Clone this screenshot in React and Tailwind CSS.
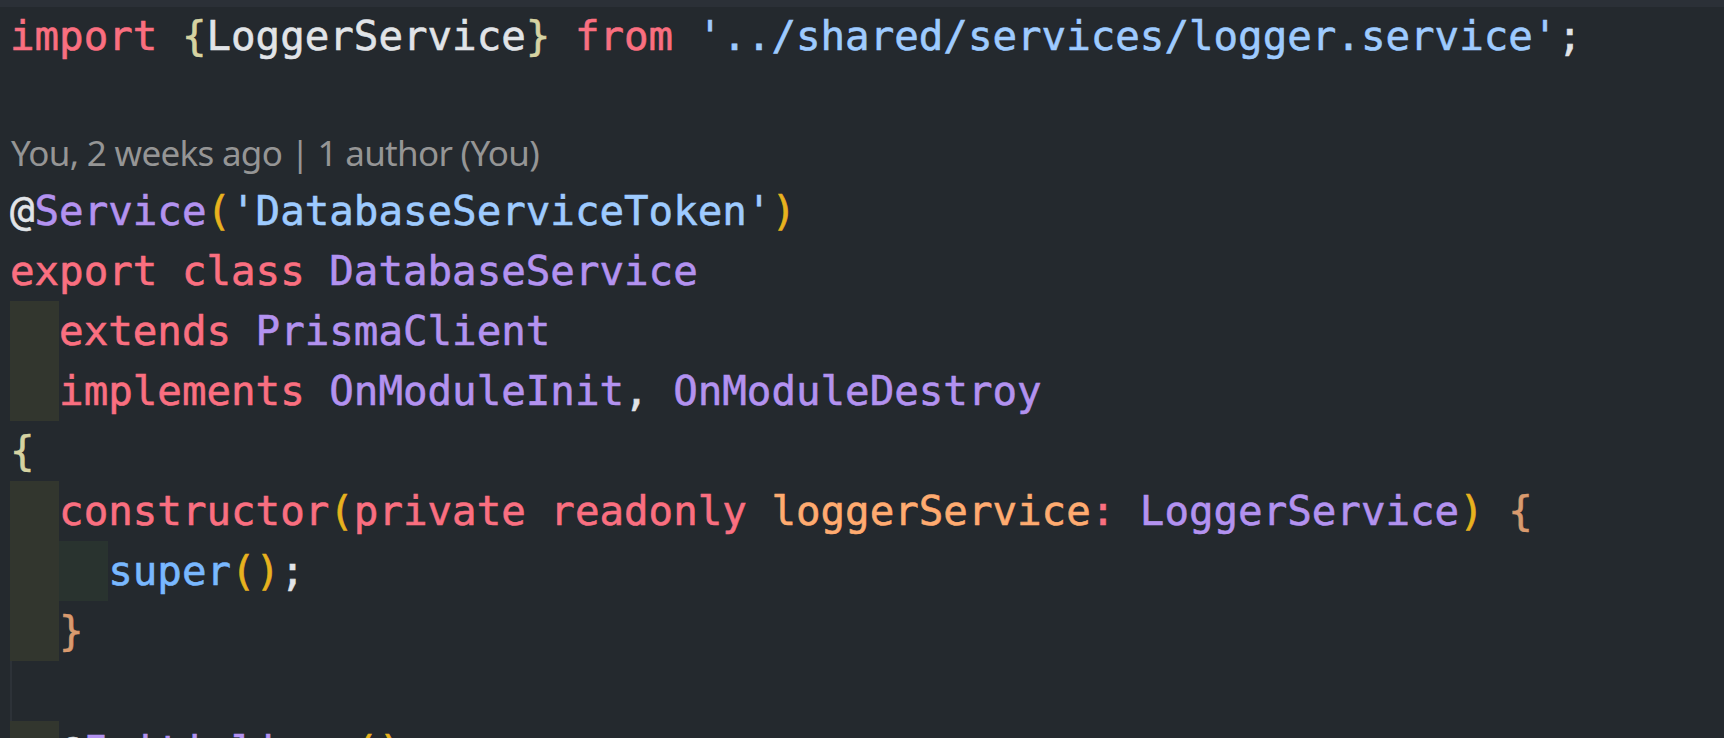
import React from "react";

const KW = "text-[#fa6f80]";
const ENT = "text-[#b392f0]";
const STR = "text-[#9ecbff]";
const CON = "text-[#79b8ff]";
const VAR = "text-[#ffab70]";
const FG = "text-[#e1e4e8]";
const BR1 = "text-[#e8b21e]";
const BR2 = "text-[#d6d3a2]";
const BR3 = "text-[#d99a6e]";

function Row({ children, indent = [], guide = false, h = "h-[60px]" }) {
  return (
    <div className={`flex ${h} pl-[10px] whitespace-pre`}>
      {indent.map((c, i) => (
        <span key={i} className={`self-stretch w-[2ch] shrink-0 ${c}`} />
      ))}
      {guide && <span className="self-stretch w-[2px] shrink-0 bg-[#2d3238]" />}
      <span className="self-center">{children}</span>
    </div>
  );
}

const OUT = "bg-[#32362e]";
const IN = "bg-[#29332f]";

export default function App() {
  return (
    <div className="w-[1724px] h-[738px] overflow-hidden bg-[#24292e] text-[40.8px] leading-[60px] font-['DejaVu_Sans_Mono',monospace] [-webkit-text-stroke:0.6px]">
      <div className="h-[7px] bg-[#2b3037]" />
      <Row h="h-[58px]">
        <span className={KW}>import</span> <span className={BR2}>{"{"}</span>
        <span className={FG}>LoggerService</span>
        <span className={BR2}>{"}"}</span> <span className={KW}>from</span>{" "}
        <span className={STR}>'../shared/services/logger.service'</span>
        <span className={FG}>;</span>
      </Row>
      <Row />
      <div className="flex h-[56px] items-center pl-[11px] text-[35px] text-[#959595] font-['Noto_Sans',sans-serif] tracking-[-0.7px] [-webkit-text-stroke:0px]">
        You, 2 weeks ago | 1 author (You)
      </div>
      <Row>
        <span className={FG}>@</span>
        <span className={ENT}>Service</span>
        <span className={BR1}>(</span>
        <span className={STR}>'DatabaseServiceToken'</span>
        <span className={BR1}>)</span>
      </Row>
      <Row>
        <span className={KW}>export</span> <span className={KW}>class</span>{" "}
        <span className={ENT}>DatabaseService</span>
      </Row>
      <Row indent={[OUT]}>
        <span className={KW}>extends</span> <span className={ENT}>PrismaClient</span>
      </Row>
      <Row indent={[OUT]}>
        <span className={KW}>implements</span>{" "}
        <span className={ENT}>OnModuleInit</span>
        <span className={FG}>,</span> <span className={ENT}>OnModuleDestroy</span>
      </Row>
      <Row>
        <span className={BR2}>{"{"}</span>
      </Row>
      <Row indent={[OUT]}>
        <span className={KW}>constructor</span>
        <span className={BR1}>(</span>
        <span className={KW}>private</span> <span className={KW}>readonly</span>{" "}
        <span className={VAR}>loggerService</span>
        <span className={KW}>:</span> <span className={ENT}>LoggerService</span>
        <span className={BR1}>)</span> <span className={BR3}>{"{"}</span>
      </Row>
      <Row indent={[OUT, IN]}>
        <span className={CON}>super</span>
        <span className={BR1}>()</span>
        <span className={FG}>;</span>
      </Row>
      <Row indent={[OUT]}>
        <span className={BR3}>{"}"}</span>
      </Row>
      <Row guide />
      <Row indent={[OUT]}>
        <span className={FG}>@</span>
        <span className={ENT}>Initializer</span>
        <span className={BR1}>()</span>
      </Row>
    </div>
  );
}
